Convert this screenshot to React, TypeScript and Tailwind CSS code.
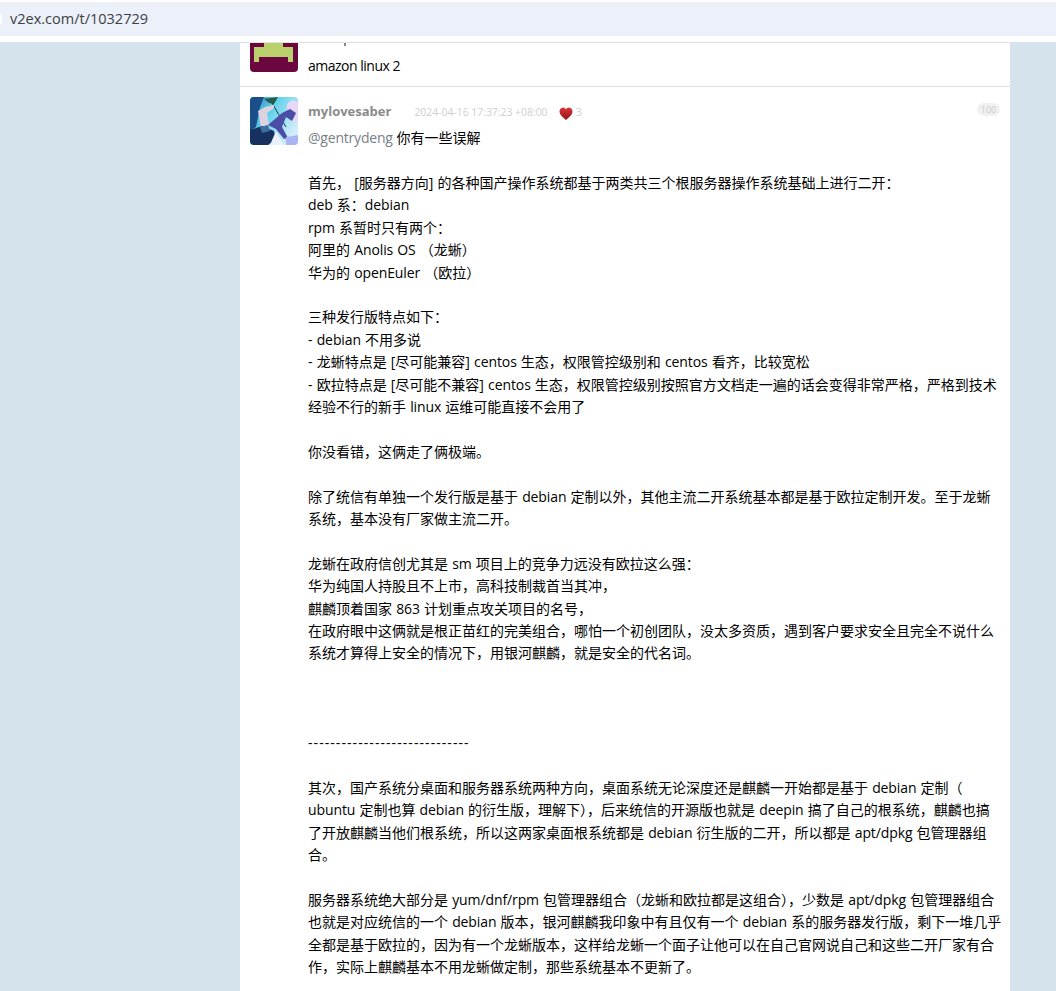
const font = { fontFamily: '"Open Sans","Noto Sans CJK SC",sans-serif' };
const paras: string[] = [
"__MENTION__",
"",
"首先， [服务器方向] 的各种国产操作系统都基于两类共三个根服务器操作系统基础上进行二开：",
"deb 系：debian",
"rpm 系暂时只有两个：",
"阿里的 Anolis OS （龙蜥）",
"华为的 openEuler （欧拉）",
"",
"三种发行版特点如下：",
"- debian 不用多说",
"- 龙蜥特点是 [尽可能兼容] centos 生态，权限管控级别和 centos 看齐，比较宽松",
"- 欧拉特点是 [尽可能不兼容] centos 生态，权限管控级别按照官方文档走一遍的话会变得非常严格，严格到技术",
"经验不行的新手 linux 运维可能直接不会用了",
"",
"你没看错，这俩走了俩极端。",
"",
"除了统信有单独一个发行版是基于 debian 定制以外，其他主流二开系统基本都是基于欧拉定制开发。至于龙蜥",
"系统，基本没有厂家做主流二开。",
"",
"龙蜥在政府信创尤其是 sm 项目上的竞争力远没有欧拉这么强：",
"华为纯国人持股且不上市，高科技制裁首当其冲，",
"麒麟顶着国家 863 计划重点攻关项目的名号，",
"在政府眼中这俩就是根正苗红的完美组合，哪怕一个初创团队，没太多资质，遇到客户要求安全且完全不说什么",
"系统才算得上安全的情况下，用银河麒麟，就是安全的代名词。",
"",
"",
"",
"__DASH__",
"",
"其次，国产系统分桌面和服务器系统两种方向，桌面系统无论深度还是麒麟一开始都是基于 debian 定制（",
"ubuntu 定制也算 debian 的衍生版，理解下），后来统信的开源版也就是 deepin 搞了自己的根系统，麒麟也搞",
"了开放麒麟当他们根系统，所以这两家桌面根系统都是 debian 衍生版的二开，所以都是 apt/dpkg 包管理器组",
"合。",
"",
"服务器系统绝大部分是 yum/dnf/rpm 包管理器组合（龙蜥和欧拉都是这组合），少数是 apt/dpkg 包管理器组合",
"也就是对应统信的一个 debian 版本，银河麒麟我印象中有且仅有一个 debian 系的服务器发行版，剩下一堆几乎",
"全都是基于欧拉的，因为有一个龙蜥版本，这样给龙蜥一个面子让他可以在自己官网说自己和这些二开厂家有合",
"作，实际上麒麟基本不用龙蜥做定制，那些系统基本不更新了。",
];

function Line({ text }: { text: string }) {
  const parts = text.split(/([A-Za-z0-9/]+)/);
  return (
    <div className="[word-spacing:0.5px]">
      {parts.map((part, i) =>
        i % 2 === 1 ? <span key={i} className="tracking-[-0.1px]">{part}</span> : <span key={i}>{part}</span>
      )}
    </div>
  );
}

export default function App() {
  return (
    <div className="h-[991px] w-[1056px] overflow-hidden bg-[#d5e4ec] text-[14px] text-black" style={font}>
      <div className="h-[42px] bg-white pt-[2px]">
        <div className="flex h-[34px] items-center bg-[#ecf0f9] text-[14.5px] text-[#3c4043]">
          <span className="mr-[8px] h-[10px] w-[2px] rounded-r-full bg-white" />
          v2ex.com/t/1032729
        </div>
      </div>
      <div className="ml-[240px] h-[949px] w-[770px] overflow-hidden border-t border-[#e2e2e2] bg-white">
        <div className="relative flex h-[44px] items-start gap-[10px] border-b border-[#e2e2e2] pl-[10px]">
          <svg width="48" height="29" viewBox="0 0 48 29" className="shrink-0">
            <path d="M0 0H48V25a4 4 0 0 1-4 4H4a4 4 0 0 1-4-4Z" fill="#6b063f" />
            <path d="M14 0H33V4H43V19H38V14H9V19H4V4H14Z" fill="#b9d06c" />
          </svg>
          <div className="pt-[13px] leading-[20px] tracking-[-0.5px]">amazon linux 2</div>
          <span className="absolute left-[104px] top-0 h-[3px] w-[2px] bg-[#7d8a96]" />
        </div>
        <div className="flex gap-[10px] pl-[10px] pr-[10px] pt-[10px]">
          <svg width="48" height="48" viewBox="0 0 48 48" className="shrink-0 rounded-[4px]">
            <defs>
              <linearGradient id="sky" x1="0" y1="0" x2="1" y2="0.6">
                <stop offset="0" stopColor="#2a7fb8" />
                <stop offset="0.45" stopColor="#63d2ea" />
                <stop offset="1" stopColor="#d4eefa" />
              </linearGradient>
            </defs>
            <rect width="48" height="48" fill="url(#sky)" />
            <path d="M38 14a6 6 0 0 1 10-8V24a8 8 0 0 1-10-10Z" fill="#e6d8f6" />
            <path d="M0 0H14L10 10L6 30L0 34Z" fill="#1b4f8c" />
            <path d="M14 2L28 0L24 7L19 6Z" fill="#245c4a" />
            <path d="M22 6L36 30" stroke="#123c3a" strokeWidth="1" />
            <path d="M8 14L15 10L24 8L24 11L17 16L19 28L11 30Z" fill="#dcd3e0" />
            <path d="M18 28L32 16L40 12L46 16L42 24L36 20L32 30L38 41L34 42L26 32Z" fill="#4b4ea6" />
            <path d="M0 33L12 29L24 34L26 42L18 48H0Z" fill="#16305f" />
            <path d="M10 30L18 28L20 34L12 36Z" fill="#3c6f9e" />
            <path d="M26 34L34 48H20Z" fill="#eaf0fd" />
            <path d="M36 40L48 38V48H36Z" fill="#a9b4f2" />
          </svg>
          <div className="min-w-0 flex-1">
            <div className="flex h-[28px] items-center">
              <span className="mr-[23px] mt-[2px] text-[13px] font-bold text-[#8a8a8a]">mylovesaber</span>
              <span className="mt-[4px] text-[10.4px] text-[#cfcfcf]">2024-04-16 17:37:23 +08:00</span>
              <svg width="14" height="13" viewBox="0 0 15 14" className="ml-[11px] mr-[3px] mt-[4px]">
                <defs>
                  <linearGradient id="heart" x1="0" y1="0" x2="0" y2="1">
                    <stop offset="0" stopColor="#d9343a" />
                    <stop offset="1" stopColor="#951216" />
                  </linearGradient>
                </defs>
                <path d="M7.5 14C3 10 .5 8 .5 4.3A3.8 3.8 0 0 1 7.5 2.3A3.8 3.8 0 0 1 14.5 4.3C14.5 8 12 10 7.5 14Z" fill="url(#heart)" />
              </svg>
              <span className="mt-[2px] text-[11.5px] text-[#cfcfcf]">3</span>
              <span className="ml-auto mt-[6px] flex h-[13px] w-[23px] items-center justify-center self-start rounded-full bg-[#f0f0f0] text-[9px] text-[#cccccc]">100</span>
            </div>
            <div className="whitespace-nowrap pt-[2.2px] leading-[22.4px]">
              {paras.map((p, i) =>
                p === "__MENTION__" ? (
                  <div key={i}><span className="tracking-[-0.2px] text-[#778087]">@gentrydeng</span> 你有一些误解</div>
                ) : p === "__DASH__" ? (
                  <div key={i} className="tracking-[1.07px]">-----------------------------</div>
                ) : p === "" ? (
                  <div key={i} className="h-[22.4px]" />
                ) : (
                  <Line key={i} text={p} />
                )
              )}
            </div>
          </div>
        </div>
      </div>
    </div>
  );
}
